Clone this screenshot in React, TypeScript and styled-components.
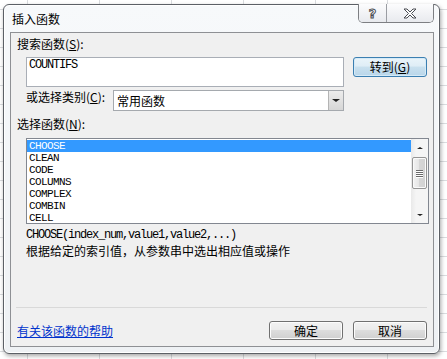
import React from "react";
import styled, { createGlobalStyle } from "styled-components";

const GlobalStyle = createGlobalStyle`
  html, body {
    margin: 0;
    padding: 0;
  }
  body {
    width: 447px;
    height: 359px;
    overflow: hidden;
    font-family: "Noto Sans CJK SC", "Liberation Sans", sans-serif;
    font-size: 12px;
    color: #000;
  }
`;

const mono = `"Liberation Mono", "DejaVu Sans Mono", monospace`;

const Desktop = styled.div`
  width: 447px;
  height: 359px;
  box-sizing: border-box;
  padding: 4px 0 0 3px;
  background-color: #fff;
  background-image: linear-gradient(to right, #dadcdf 1px, transparent 1px),
    linear-gradient(to bottom, #dadcdf 1px, transparent 1px);
  background-size: 72px 100%, 100% 19px;
  background-position: 27px 0, 0 9px;
`;

const Window = styled.div`
  width: 437px;
  height: 350px;
  box-sizing: border-box;
  border: 1px solid #5c6066;
  border-radius: 6px;
  background: linear-gradient(#f7f9fb, #eef1f4);
  box-shadow: 1px 2px 4px rgba(0, 0, 0, 0.35), inset 0 0 0 1px #fff;
  display: flex;
  flex-direction: column;
  padding: 0 5px 6px 6px;
`;

const TitleBar = styled.div`
  height: 27px;
  flex: none;
  display: flex;
  justify-content: space-between;
  align-items: flex-start;
`;

const Title = styled.div`
  padding: 7px 0 0 2px;
  line-height: 14px;
  color: #000;
`;

const CaptionButtons = styled.div`
  margin-top: -1px;
  display: flex;
  height: 18px;
  border: 1px solid #7d7f83;
  border-top: none;
  border-radius: 0 0 5px 5px;
  overflow: hidden;
  box-shadow: inset 0 0 0 1px #fff;
`;

const CaptionButton = styled.div<{ $w: number }>`
  width: ${(p) => p.$w}px;
  display: flex;
  align-items: center;
  justify-content: center;
  background: linear-gradient(#fcfcfd, #e8eaee);
  & + & {
    border-left: 1px solid #9a9da2;
  }
`;

const HelpGlyph = styled.span`
  font-family: "DejaVu Sans", sans-serif;
  font-weight: bold;
  font-size: 13px;
  line-height: 13px;
  color: #fff;
  -webkit-text-stroke: 1px #4a4d52;
`;

const Client = styled.div`
  flex: 1;
  border: 1px solid #8e9094;
  background: #f0f0f0;
  display: flex;
  flex-direction: column;
`;

const SectionLabel = styled.div<{ $top: number }>`
  margin: ${(p) => p.$top}px 0 0 6px;
  line-height: 14px;
  height: 14px;
`;

const Row = styled.div<{ $top: number }>`
  margin: ${(p) => p.$top}px 0 0 15px;
  display: flex;
  align-items: flex-start;
`;

const MonoText = `
  font-family: ${mono};
  font-size: 12px;
  letter-spacing: -1.2px;
`;

const SearchBox = styled.div`
  width: 318px;
  height: 30px;
  box-sizing: border-box;
  border: 1px solid #a9aeb6;
  background: #fff;
  padding: 1px 2px;
  ${MonoText}
  line-height: 13px;
`;

const Button = styled.div<{ $default?: boolean }>`
  width: 74px;
  height: 19px;
  box-sizing: border-box;
  border: 1px solid ${(p) => (p.$default ? "#3c7fb1" : "#707070")};
  border-radius: 3px;
  background: ${(p) =>
    p.$default
      ? "linear-gradient(#eaf4fa 0%, #dfedf6 45%, #c9e0ee 50%, #b9d6ea 100%)"
      : "linear-gradient(#f2f2f2 0%, #ebebeb 45%, #dddddd 50%, #cfcfcf 100%)"};
  box-shadow: inset 0 0 0 1px ${(p) => (p.$default ? "#d5eaf7" : "#fcfcfc")};
  display: flex;
  align-items: center;
  justify-content: center;
  line-height: 14px;
`;

const GoButton = styled(Button)`
  margin-left: 9px;
  height: 20px;
`;

const CategoryLabel = styled.div`
  width: 87px;
  line-height: 14px;
`;

const Select = styled.div`
  width: 231px;
  height: 21px;
  box-sizing: border-box;
  border: 1px solid #a5a9ae;
  background: #fff;
  display: flex;
  align-items: center;
  padding-left: 3px;
  line-height: 14px;
`;

const SelectText = styled.span`
  flex: 1;
`;

const DropButton = styled.div`
  width: 15px;
  height: 19px;
  box-sizing: border-box;
  border-left: 1px solid #b4b4b4;
  background: linear-gradient(#ececec, #d6d6d6);
  display: flex;
  align-items: center;
  justify-content: center;
`;

const Triangle = styled.span<{ $up?: boolean; $size?: number }>`
  width: 0;
  height: 0;
  border-left: ${(p) => p.$size ?? 4}px solid transparent;
  border-right: ${(p) => p.$size ?? 4}px solid transparent;
  ${(p) =>
    p.$up
      ? `border-bottom: ${(p.$size ?? 4) - 1}px solid #222;`
      : `border-top: ${(p.$size ?? 4) - 1}px solid #222;`}
`;

const List = styled.div`
  margin: 7px 0 0 15px;
  width: 403px;
  height: 86px;
  box-sizing: border-box;
  border: 1px solid #828790;
  background: #fff;
  display: flex;
`;

const Items = styled.div`
  flex: 1;
  padding-top: 1px;
`;

const Item = styled.div<{ $selected?: boolean }>`
  height: 12px;
  line-height: 12px;
  padding-left: 2px;
  font-family: ${mono};
  font-size: 11px;
  letter-spacing: -0.6px;
  background: ${(p) => (p.$selected ? "#3399ff" : "transparent")};
  color: ${(p) => (p.$selected ? "#fff" : "#000")};
`;

const ScrollBar = styled.div`
  width: 17px;
  display: flex;
  flex-direction: column;
  background: linear-gradient(to right, #e9e9e9, #f5f5f5 30%, #f5f5f5);
`;

const ScrollArrow = styled.div`
  height: 17px;
  display: flex;
  align-items: center;
  justify-content: center;
`;

const ScrollTrack = styled.div`
  flex: 1;
  padding: 1px 1px 0 1px;
`;

const Thumb = styled.div`
  height: 32px;
  box-sizing: border-box;
  border: 1px solid #959595;
  border-radius: 2px;
  background: linear-gradient(to right, #f3f3f3, #e6e6e6 45%, #d6d6d6 50%, #d2d2d2);
  box-shadow: inset 0 0 0 1px #fafafa;
  display: flex;
  flex-direction: column;
  align-items: center;
  justify-content: center;
  gap: 1px;
`;

const Grip = styled.span`
  width: 7px;
  height: 1px;
  background: #6a6a6a;
  box-shadow: 0 1px 0 #fff;
`;

const Syntax = styled.div`
  margin: 5px 0 0 15px;
  ${MonoText}
  line-height: 13px;
`;

const Description = styled.div`
  margin: 2px 0 0 15px;
  line-height: 14px;
`;

const Separator = styled.div`
  margin: auto 0 0 5px;
  width: 411px;
  height: 1px;
  background: #d9d9d9;
`;

const Footer = styled.div`
  margin-top: 13px;
  height: 19px;
  padding: 0 6px 6px 6px;
  display: flex;
  align-items: center;
  gap: 10px;
`;

const HelpLink = styled.a`
  flex: 1;
  color: #0033cc;
  text-decoration: underline;
  line-height: 14px;
  cursor: pointer;
`;

const functions = ["CHOOSE", "CLEAN", "CODE", "COLUMNS", "COMPLEX", "COMBIN", "CELL"];

const CloseIcon = () => (
  <svg width="14" height="11" viewBox="0 0 14 11">
    <polygon
      points="1,1 4,1 7,4 10,1 13,1 8.5,5.5 13,10 10,10 7,7 4,10 1,10 5.5,5.5"
      fill="#fff"
      stroke="#4a4d52"
      strokeWidth="1"
      strokeLinejoin="round"
    />
  </svg>
);

export default function App() {
  return (
    <Desktop>
      <GlobalStyle />
      <Window>
        <TitleBar>
          <Title>插入函数</Title>
          <CaptionButtons>
            <CaptionButton $w={27}>
              <HelpGlyph>?</HelpGlyph>
            </CaptionButton>
            <CaptionButton $w={46}>
              <CloseIcon />
            </CaptionButton>
          </CaptionButtons>
        </TitleBar>
        <Client>
          <SectionLabel $top={4}>
            搜索函数(<u>S</u>):
          </SectionLabel>
          <Row $top={6}>
            <SearchBox>COUNTIFS</SearchBox>
            <GoButton $default>
              转到(<u>G</u>)
            </GoButton>
          </Row>
          <Row $top={3}>
            <CategoryLabel>
              或选择类别(<u>C</u>):
            </CategoryLabel>
            <Select>
              <SelectText>常用函数</SelectText>
              <DropButton>
                <Triangle />
              </DropButton>
            </Select>
          </Row>
          <SectionLabel $top={6}>
            选择函数(<u>N</u>):
          </SectionLabel>
          <List>
            <Items>
              {functions.map((f, i) => (
                <Item key={f} $selected={i === 0}>
                  {f}
                </Item>
              ))}
            </Items>
            <ScrollBar>
              <ScrollArrow>
                <Triangle $up $size={3} />
              </ScrollArrow>
              <ScrollTrack>
                <Thumb>
                  <Grip />
                  <Grip />
                  <Grip />
                  <Grip />
                </Thumb>
              </ScrollTrack>
              <ScrollArrow>
                <Triangle $size={3} />
              </ScrollArrow>
            </ScrollBar>
          </List>
          <Syntax>CHOOSE(index_num,value1,value2,...)</Syntax>
          <Description>根据给定的索引值，从参数串中选出相应值或操作</Description>
          <Separator />
          <Footer>
            <HelpLink>有关该函数的帮助</HelpLink>
            <Button>确定</Button>
            <Button>取消</Button>
          </Footer>
        </Client>
      </Window>
    </Desktop>
  );
}
